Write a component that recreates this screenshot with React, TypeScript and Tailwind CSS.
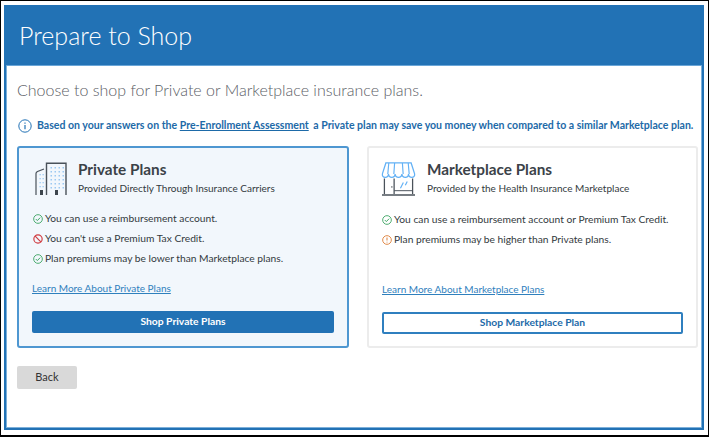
const BLUE = "#2272b5";

function Check() {
  return (
    <svg width="10" height="10" viewBox="0 0 12 12" fill="none" className="shrink-0">
      <circle cx="6" cy="6" r="5.2" stroke="#3fa565" strokeWidth="1.1" />
      <path d="M3.4 6.1l1.8 1.8 3.4-3.5" stroke="#3fa565" strokeWidth="1.2" />
    </svg>
  );
}

function Ban() {
  return (
    <svg width="10" height="10" viewBox="0 0 12 12" fill="none" className="shrink-0">
      <circle cx="6" cy="6" r="5" stroke="#cf3a3f" strokeWidth="1.4" />
      <path d="M2.6 2.6l6.8 6.8" stroke="#cf3a3f" strokeWidth="1.4" />
    </svg>
  );
}

function Warn() {
  return (
    <svg width="10" height="10" viewBox="0 0 12 12" fill="none" className="shrink-0">
      <circle cx="6" cy="6" r="5.2" stroke="#e08a4a" strokeWidth="1.2" />
      <path d="M6 3v3.6M6 8v1.1" stroke="#e08a4a" strokeWidth="1.3" />
    </svg>
  );
}

function Info() {
  return (
    <svg width="14" height="14" viewBox="0 0 14 14" fill="none" className="shrink-0 ml-[1px]">
      <circle cx="7" cy="7" r="6.2" stroke={BLUE} strokeWidth="1" />
      <path d="M7 6v4.2M7 3.6v1.2" stroke={BLUE} strokeWidth="1.2" />
    </svg>
  );
}

function Building() {
  const dots: [number, number][] = [];
  for (const x of [15.5, 19.5, 23.5, 27.5]) {
    for (const y of [5, 9, 13, 17, 21, 25]) dots.push([x, y]);
  }
  return (
    <svg width="32" height="34" viewBox="0 0 32 34" fill="none" className="shrink-0 mt-[3px]">
      <path d="M1 33V11.5c0-1 .5-1.5 1.5-2L9 7" stroke="#4a525a" strokeWidth="1.2" />
      <path d="M11.5 33V1.2h19.5V33" stroke="#4a525a" strokeWidth="1.4" />
      <rect x="5" y="28" width="3" height="5" fill="#3d454d" />
      <rect x="20" y="28" width="3" height="5" fill="#3d454d" />
      {[12, 16, 20, 24].map((y) => (
        <g key={y}>
          <rect x="4.5" y={y} width="1.3" height="1.3" fill="#9cc9f2" />
          <rect x="7.5" y={y} width="1.3" height="1.3" fill="#9cc9f2" />
        </g>
      ))}
      {dots.map(([x, y]) => (
        <rect key={`${x}-${y}`} x={x} y={y} width="1.5" height="1.5" fill="#9cc9f2" />
      ))}
    </svg>
  );
}

function Store() {
  return (
    <svg width="35" height="35" viewBox="0 0 36 36" fill="none" className="shrink-0 mt-[3px] -ml-[1px]">
      <path
        d="M5 1h26l3.500 11c.6 2.200-.8 3.800-2.800 3.800-2 0-3.300-1.400-3.400-3.400 0 2-1.400 3.400-3.300 3.400s-3.300-1.400-3.500-3.400c-.2 2-1.600 3.400-3.500 3.400s-3.300-1.400-3.500-3.400c-.1 2-1.500 3.400-3.400 3.400s-3.200-1.400-3.400-3.400c-.1 2-1.400 3.400-3.400 3.400S.9 14.200 1.500 12L5 1z"
        stroke="#63b1f5"
        strokeWidth="1.3"
      />
      <path d="M8 1L7 12.400M14 1l-.8 11.400M22 1l.8 11.400M28 1l1 11.400" stroke="#63b1f5" strokeWidth="1.2" />
      <path d="M3.500 17v16M13.500 17v16M32.500 17v16" stroke="#4a525a" strokeWidth="1.300" />
      <path d="M1 34h34" stroke="#4a525a" strokeWidth="1.500" />
      <path d="M13.500 29.500h19" stroke="#4a525a" strokeWidth="1" />
      <path d="M20 27l3-6M25 24l2-4" stroke="#63b1f5" strokeWidth="1.200" />
      <rect x="10.500" y="25" width="1.300" height="1.300" fill="#4a525a" />
    </svg>
  );
}

function Row({ icon, children }: { icon: React.ReactNode; children: React.ReactNode }) {
  return (
    <div className="flex items-center gap-[2px] h-[20px] pt-[1px] text-[10.250px] text-[#333a40] whitespace-nowrap">
      {icon}
      <span>{children}</span>
    </div>
  );
}

export default function App() {
  return (
    <div
      className="w-[709px] h-[437px] border border-b-2 border-black bg-white pl-[3px] pt-[4px] pr-[4px] pb-[5px] overflow-hidden"
      style={{ fontFamily: '"Lato", "Noto Sans", sans-serif' }}
    >
      <div className="h-full border-2 border-[#2272b5] flex flex-col">
        <div className="h-[59px] shrink-0 bg-[#2272b5] pl-[13px] flex items-center text-white font-light text-[25px] border-b border-b-[#6aa6d8]">
          Prepare to Shop
        </div>
        <div className="flex-1 border-x border-b border-[#7db0da] pl-[10px] flex flex-col">
          <div className="mt-[12px] text-[#5b6066] text-[16px] leading-[24px] font-light whitespace-nowrap">
            Choose to shop for Private or Marketplace insurance plans.
          </div>
          <div className="mt-[15px] flex items-center gap-[5px] h-[18px] text-[10.550px] font-bold text-[#1d6aa8] whitespace-nowrap">
            <Info />
            <span>
              Based on your answers on the <span className="underline">Pre-Enrollment Assessment</span>{" "}
              <span className="ml-[2px]">a Private plan may save you money when compared to a similar Marketplace plan.</span>
            </span>
          </div>
          <div className="mt-[11px] flex gap-[18px]">
            <div className="w-[332px] shrink-0 h-[202px] rounded-[3px] border-2 border-[#4e97d1] bg-[#f2f7fc] px-[13px] pt-[11px] flex flex-col">
              <div className="flex items-start gap-[11px] pl-[3px]">
                <Building />
                <div>
                  <div className="text-[15.300px] leading-[20px] font-bold text-[#3b4248]">Private Plans</div>
                  <div className="text-[10px] leading-[16px] mt-[1px] text-[#333a40]">
                    Provided Directly Through Insurance Carriers
                  </div>
                </div>
              </div>
              <div className="mt-[12px] pl-[1px]">
                <Row icon={<Check />}>You can use a reimbursement account.</Row>
                <Row icon={<Ban />}>You can't use a Premium Tax Credit.</Row>
                <Row icon={<Check />}>Plan premiums may be lower than Marketplace plans.</Row>
              </div>
              <a className="mt-[12px] text-[10px] leading-[16px] underline text-[#2f80bd]">Learn More About Private Plans</a>
              <button className="mt-[15px] h-[22px] shrink-0 rounded-[2px] bg-[#2272b5] text-white text-[10.300px] font-bold">
                Shop Private Plans
              </button>
            </div>
            <div className="w-[331px] shrink-0 h-[202px] rounded-[3px] border-2 border-[#ececec] bg-white px-[13px] pt-[11px] flex flex-col">
              <div className="flex items-start gap-[11px]">
                <Store />
                <div>
                  <div className="text-[15.300px] leading-[20px] font-bold text-[#3b4248]">Marketplace Plans</div>
                  <div className="text-[10px] leading-[16px] mt-[1px] text-[#333a40]">
                    Provided by the Health Insurance Marketplace
                  </div>
                </div>
              </div>
              <div className="mt-[12px]">
                <Row icon={<Check />}>You can use a reimbursement account or Premium Tax Credit.</Row>
                <Row icon={<Warn />}>Plan premiums may be higher than Private plans.</Row>
              </div>
              <a className="mt-[32px] text-[10px] leading-[16px] underline text-[#2f80bd]">Learn More About Marketplace Plans</a>
              <button className="mt-[15px] h-[22px] shrink-0 rounded-[2px] border-2 border-[#2f7fbf] bg-white text-[#1d6aa8] text-[10.300px] font-bold">
                Shop Marketplace Plan
              </button>
            </div>
          </div>
          <button className="mt-[18px] w-[60px] h-[23px] shrink-0 rounded-[2px] bg-[#d9d9d9] text-[#333] text-[11px]">
            Back
          </button>
        </div>
      </div>
    </div>
  );
}
